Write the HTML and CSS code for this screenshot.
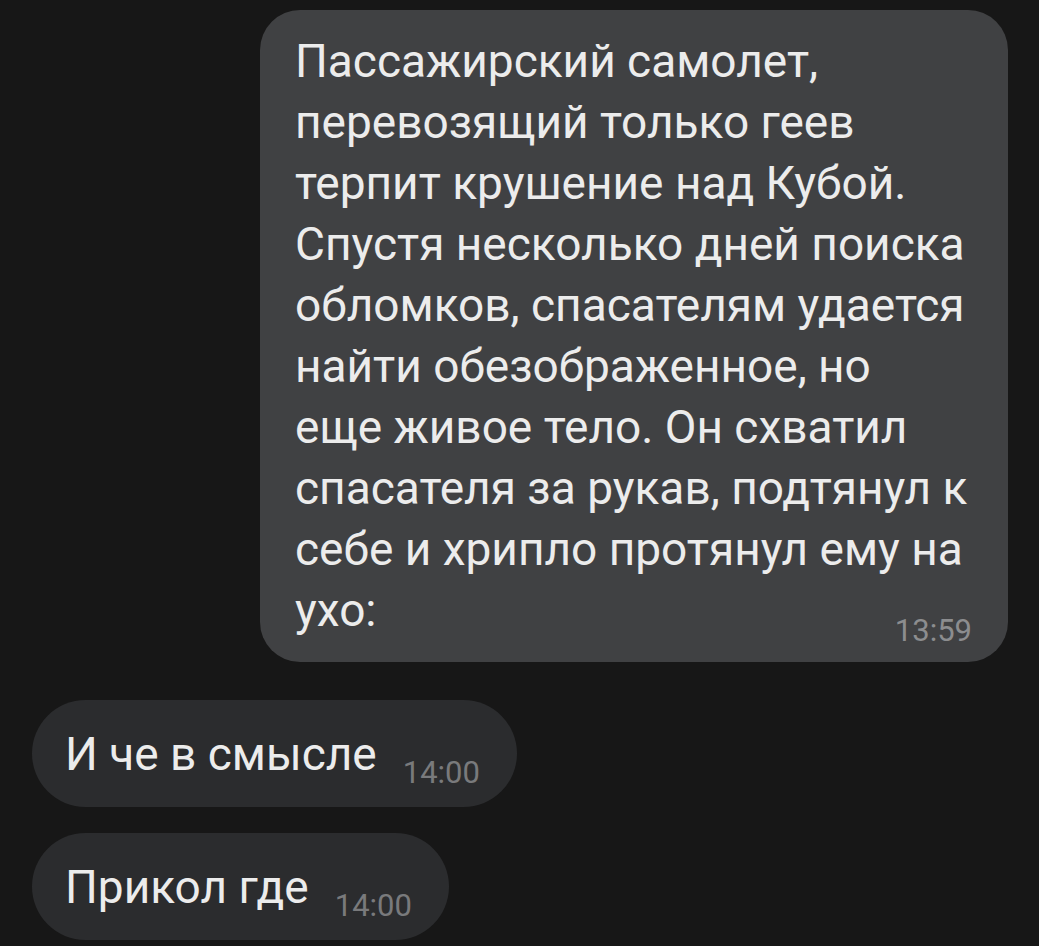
FILE: index.html
```html
<!DOCTYPE html>
<html>
  <head>
    <meta content="text/html; charset=utf-8" http-equiv="content-type">
    <title>Чат</title>
    <link rel="stylesheet" href="styles.css">
  </head>
  <body>
    <div class="chat">
      <div class="msg out">
        <span class="text">Пассажирский самолет,<br>
        перевозящий только геев<br>
        терпит крушение над Кубой.<br>
        Спустя несколько дней поиска<br>
        обломков, спасателям удается<br>
        найти обезображенное, но<br>
        еще живое тело. Он схватил<br>
        спасателя за рукав, подтянул к<br>
        себе и хрипло протянул ему на<br>
        ухо:</span><span class="time">13:59</span>
      </div>

      <div class="msg in">
        <span class="text">И че в смысле</span>
        <span class="time">14:00</span>
      </div>

      <div class="msg in next">
        <span class="text">Прикол где</span>
        <span class="time">14:00</span>
      </div>
    </div>
  </body>
</html>
```
FILE: styles.css
```css
body {
    margin: 0;
    background-color: #171717;
    color: #ececec;
    font-family: Roboto, "Noto Sans", sans-serif;
    overflow: hidden;
}

.chat {
    display: flex;
    flex-direction: column;
    padding: 10px 31px 0 32px;
}

.msg {
    font-size: 46px;
    line-height: 61px;
    white-space: nowrap;
}

.msg .time {
    font-size: 31px;
    line-height: 24px;
    color: #8c8d8f;
}

/* own message, right side */
.msg.out {
    align-self: flex-end;
    width: 748px;
    box-sizing: border-box;
    background-color: #404143;
    border-radius: 40px;
    padding: 21px 36px 19px 35px;
    display: flow-root;
}

.msg.out .time {
    float: right;
    margin-top: 39px;
}

/* incoming messages, left side */
.msg.in {
    align-self: flex-start;
    display: flex;
    align-items: flex-start;
    gap: 26px;
    background-color: #2b2c2e;
    border-radius: 54px;
    padding: 24px 37px 22px 33px;
    margin-top: 38px;
}

.msg.in .time {
    margin-top: 37px;
    color: #797a7c;
}

.msg.in.next {
    margin-top: 26px;
}
```
